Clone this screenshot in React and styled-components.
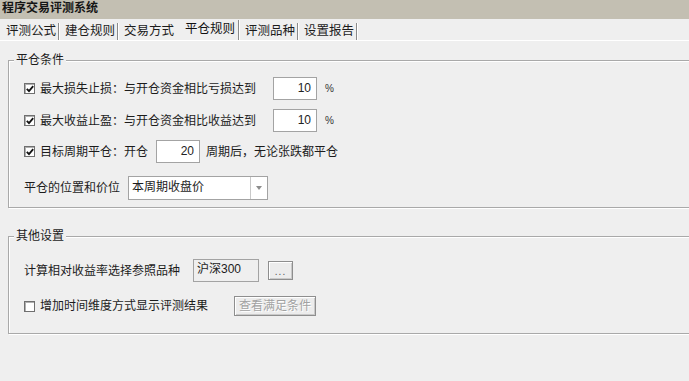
import React from 'react'
import styled, { createGlobalStyle, css } from 'styled-components'

const FONT = `"Liberation Sans", "Noto Sans CJK SC", sans-serif`
const PANEL_BG = '#efefef'
const TABS = ['评测公式', '建仓规则', '交易方式', '平仓规则', '评测品种', '设置报告']
const ACTIVE_TAB = 3

const App = () => {
  return (
    <Window>
      <GlobalStyle />
      <TitleBar>程序交易评测系统</TitleBar>
      <TabStrip>
        {TABS.map((label, i) => (
          <Tab key={label} $active={i === ACTIVE_TAB} $noSep={i === ACTIVE_TAB - 1}>
            {label}
          </Tab>
        ))}
      </TabStrip>

      <GroupBox $top={11} $padTop={9} $padBottom={7}>
        <Legend>平仓条件</Legend>
        <Row>
          <CheckBox checked />
          <Label>最大损失止损：与开仓资金相比亏损达到</Label>
          <NumberBox $ml={17}>10</NumberBox>
          <Unit>%</Unit>
        </Row>
        <Row $mt={9}>
          <CheckBox checked />
          <Label>最大收益止盈：与开仓资金相比收益达到</Label>
          <NumberBox $ml={17}>10</NumberBox>
          <Unit>%</Unit>
        </Row>
        <Row $mt={8}>
          <CheckBox checked />
          <Label>目标周期平仓：开仓</Label>
          <NumberBox $ml={8}>20</NumberBox>
          <Label $ml={6}>周期后，无论张跌都平仓</Label>
        </Row>
        <Row $mt={13}>
          <Text>平仓的位置和价位</Text>
          <Select>
            <SelectValue>本周期收盘价</SelectValue>
            <DropButton>
              <Arrow />
            </DropButton>
          </Select>
        </Row>
      </GroupBox>

      <GroupBox $top={20} $padTop={15} $padBottom={17}>
        <Legend>其他设置</Legend>
        <Row>
          <Text>计算相对收益率选择参照品种</Text>
          <ReadOnlyBox>沪深300</ReadOnlyBox>
          <Button $w={25} $h={19} $ml={9}>
            <Dots>...</Dots>
          </Button>
        </Row>
        <Row $mt={14}>
          <CheckBox />
          <Label>增加时间维度方式显示评测结果</Label>
          <Button $w={82} $h={20} $ml={26} disabled>
            查看满足条件
          </Button>
        </Row>
      </GroupBox>
    </Window>
  )
}

const CheckBox = ({ checked }) => (
  <Box>
    {checked && (
      <svg width='8' height='8' viewBox='0 0 8 8'>
        <polyline points='0.8,3.8 3,6.2 7.2,1.2' fill='none' stroke='#111' strokeWidth='1.8' />
      </svg>
    )}
  </Box>
)

const GlobalStyle = createGlobalStyle`
  html, body {
    margin: 0;
    padding: 0;
    background: ${PANEL_BG};
    overflow: hidden;
  }
  body {
    font-family: ${FONT};
    font-size: 12px;
    color: #1c1c1c;
  }
`

const Window = styled.div`
  width: 689px;
  height: 381px;
  display: flex;
  flex-direction: column;
  overflow: hidden;
`

const TitleBar = styled.div`
  flex-shrink: 0;
  height: 19px;
  padding-left: 2px;
  background: #c3bfb2;
  font-weight: bold;
  font-size: 12px;
  line-height: 17px;
  color: #151515;
`

const TabStrip = styled.div`
  flex-shrink: 0;
  height: 21px;
  display: flex;
  align-items: flex-end;
  border-bottom: 1px solid #ffffff;
`

const Tab = styled.div`
  height: 17px;
  padding: 0 2px 0 6px;
  font-size: 12.5px;
  line-height: 17px;
  white-space: nowrap;
  border-right: 1px solid #8a8a8a;
  box-shadow: 1px 0 0 #ffffff;
  ${({ $noSep }) =>
    $noSep &&
    css`
      border-right-color: transparent;
      box-shadow: none;
    `}
  ${({ $active }) =>
    $active &&
    css`
      height: 20px;
      padding: 0 3px 2px 8px;
      line-height: 18px;
      box-sizing: border-box;
      color: #111;
    `}
`

const GroupBox = styled.fieldset`
  margin: ${({ $top }) => $top}px 0 0 8px;
  width: 720px;
  min-width: 0;
  flex-shrink: 0;
  box-sizing: border-box;
  padding: ${({ $padTop }) => $padTop}px 0 ${({ $padBottom }) => $padBottom}px 15px;
  border: 1px solid #a9a9a9;
  box-shadow: inset 1px 1px 0 #ffffff, 1px 1px 0 #ffffff;
  display: flex;
  flex-direction: column;
`

const Legend = styled.legend`
  margin-left: -10px;
  padding: 0 2px;
  font-size: 12px;
  line-height: 16px;
  background: ${PANEL_BG};
`

const Row = styled.div`
  display: flex;
  align-items: center;
  margin-top: ${({ $mt }) => $mt || 0}px;
`

const Box = styled.span`
  width: 11px;
  height: 11px;
  box-sizing: border-box;
  border: 1px solid #6f6f6f;
  background: #ffffff;
  box-shadow: inset 1px 1px 0 #b0b0b0;
  display: flex;
  align-items: center;
  justify-content: center;
`

const Text = styled.span`
  font-size: 12px;
  line-height: 16px;
  white-space: nowrap;
`

const Label = styled(Text)`
  margin-left: ${({ $ml }) => ($ml === undefined ? 5 : $ml)}px;
`

const NumberBox = styled.div`
  margin-left: ${({ $ml }) => $ml}px;
  width: 44px;
  height: 23px;
  box-sizing: border-box;
  border: 1px solid #a3a3a3;
  background: #ffffff;
  padding-right: 5px;
  text-align: right;
  font-size: 12px;
  line-height: 20px;
  color: #222;
`

const Unit = styled.span`
  margin-left: 8px;
  font-size: 10px;
  color: #333;
`

const Select = styled.div`
  margin-left: 8px;
  width: 140px;
  height: 24px;
  box-sizing: border-box;
  border: 1px solid #a3a3a3;
  background: #ffffff;
  display: flex;
`

const SelectValue = styled.span`
  flex: 1;
  padding-left: 3px;
  font-size: 12px;
  line-height: 21px;
`

const DropButton = styled.span`
  width: 16px;
  border-left: 1px solid #c9c9c9;
  display: flex;
  align-items: center;
  justify-content: center;
`

const Arrow = styled.span`
  width: 0;
  height: 0;
  border-left: 3.5px solid transparent;
  border-right: 3.5px solid transparent;
  border-top: 4px solid #8d8d8d;
`

const ReadOnlyBox = styled.div`
  margin-left: 13px;
  width: 66px;
  height: 23px;
  box-sizing: border-box;
  border: 1px solid #a3a3a3;
  background: ${PANEL_BG};
  padding: 1px 0 0 3px;
  font-size: 12px;
  line-height: 16px;
`

const Button = styled.button`
  margin-left: ${({ $ml }) => $ml}px;
  width: ${({ $w }) => $w}px;
  height: ${({ $h }) => $h}px;
  box-sizing: border-box;
  padding: 0;
  border: 1px solid #8e8e8e;
  background: #ececec;
  box-shadow: inset 1px 1px 0 #ffffff, inset -1px -1px 0 #c9c9c9;
  font-family: ${FONT};
  font-size: 12px;
  line-height: 16px;
  color: #222;
  &:disabled {
    color: #a2a2a2;
    text-shadow: 1px 1px 0 #ffffff;
  }
`

const Dots = styled.span`
  display: block;
  font-size: 10px;
  line-height: 10px;
  padding-top: 3px;
  color: #555;
  letter-spacing: 1px;
`

export default App
